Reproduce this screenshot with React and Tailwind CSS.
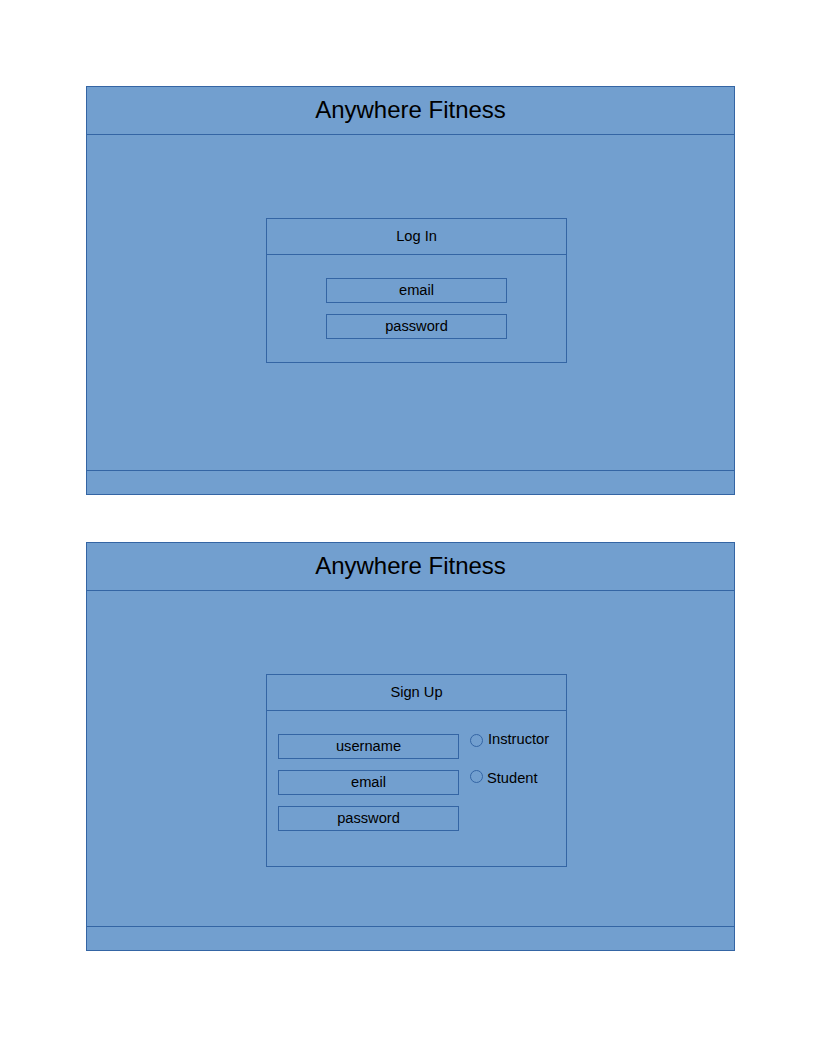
import React from 'react'

// Two wireframe screens: log in + sign up, same frame chrome.

const font = { fontFamily: '"Liberation Sans", Arial, sans-serif' }

function Frame({ children }) {
  return (
    <div className="w-[649px] h-[409px] flex flex-col border border-[#3465a4] bg-[#729fcf]">
      <div className="h-[48px] shrink-0 flex items-center justify-center pb-[2px] border-b border-[#3465a4] text-[24px] text-black">
        Anywhere Fitness
      </div>
      <div className="flex-1 pt-[83px] pl-[179px]">{children}</div>
      <div className="h-[24px] shrink-0 border-t border-[#3465a4]" />
    </div>
  )
}

function Field({ label }) {
  return (
    <div className="w-[181px] h-[25px] border border-[#3465a4] flex items-center justify-center pb-[2px] text-[14.67px] text-black">
      {label}
    </div>
  )
}

function Radio({ label, textOffset = 'mt-[-2px]' }) {
  return (
    <div className="flex items-start gap-[5px] text-[14.67px] text-black leading-none">
      <span className="w-[13px] h-[13px] rounded-full border border-[#3465a4]" />
      <span className={textOffset}>{label}</span>
    </div>
  )
}

export default function App() {
  return (
    <div className="w-[816px] h-[1056px] bg-white pt-[86px] pl-[86px]" style={font}>
      <Frame>
        <div className="w-[301px] h-[145px] border border-[#3465a4] flex flex-col">
          <div className="h-[36px] flex items-center justify-center pb-[2px] border-b border-[#3465a4] text-[14.67px] text-black">
            Log In
          </div>
          <div className="flex flex-col items-center gap-[11px] pt-[23px]">
            <Field label="email" />
            <Field label="password" />
          </div>
        </div>
      </Frame>

      <div className="h-[47px]" />

      <Frame>
        <div className="w-[301px] h-[193px] border border-[#3465a4] flex flex-col">
          <div className="h-[36px] flex items-center justify-center pb-[2px] border-b border-[#3465a4] text-[14.67px] text-black">
            Sign Up
          </div>
          <div className="flex gap-[11px] pt-[23px] pl-[11px]">
            <div className="flex flex-col gap-[11px]">
              <Field label="username" />
              <Field label="email" />
              <Field label="password" />
            </div>
            <div className="flex flex-col gap-[23px]">
              <Radio label="Instructor" />
              <Radio label="Student" textOffset="mt-[1px] ml-[-1px]" />
            </div>
          </div>
        </div>
      </Frame>
    </div>
  )
}
